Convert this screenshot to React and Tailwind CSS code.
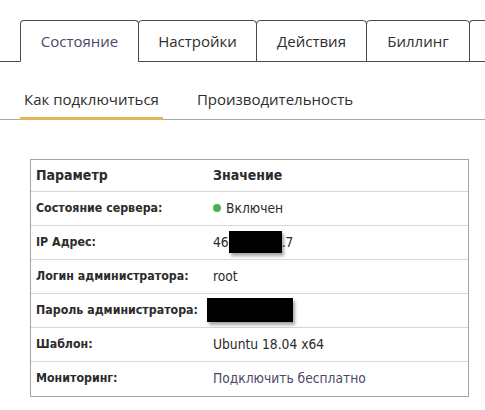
const tabs = [
  { label: "Состояние", w: "w-[119px]" },
  { label: "Настройки", w: "w-[119px]" },
  { label: "Действия", w: "w-[111px]" },
  { label: "Биллинг", w: "w-[104px]" },
];

const rows = [
  { label: "Состояние сервера:", value: "status" },
  { label: "IP Адрес:", value: "ip" },
  { label: "Логин администратора:", value: "root" },
  { label: "Пароль администратора:", value: "password" },
  { label: "Шаблон:", value: "Ubuntu 18.04 x64" },
  { label: "Мониторинг:", value: "monitoring" },
];

function Redacted({ className }) {
  return <span className={"inline-block bg-black shadow-[2px_3px_3px_rgba(0,0,0,0.35)] " + className} />;
}

function Value({ v }) {
  if (v === "status")
    return (
      <span className="flex items-center gap-[5px]">
        <span className="h-2 w-2 rounded-full bg-[#4cae4c]" />
        Включен
      </span>
    );
  if (v === "ip")
    return (
      <span className="flex items-center">
        46
        <Redacted className="h-[22px] w-[53px]" />
        .7
      </span>
    );
  if (v === "password")
    return (
      <span className="-ml-1.5 flex items-center">
        <Redacted className="h-[24px] w-[86px]" />
      </span>
    );
  if (v === "monitoring") return <span className="text-[#4b4866]">Подключить бесплатно</span>;
  return v;
}

export default function App() {
  return (
    <div className="h-[410px] w-[485px] overflow-hidden bg-white" style={{ fontFamily: '"Open Sans", sans-serif' }}>
      <div className="flex pt-5">
        <div className="w-5 shrink-0 border-b border-[#4a4858]" />
        {tabs.map((t, i) => (
          <div
            key={t.label}
            className={
              "flex h-[42px] shrink-0 items-center justify-center whitespace-nowrap rounded-t-[4px] border border-[#4a4858] text-[15px] " +
              t.w +
              (i === 0 ? " border-b-white text-[#4b4866]" : " -ml-px text-[#2d2d2d]")
            }
          >
            {t.label}
          </div>
        ))}
        <div className="-ml-px h-[42px] flex-1 rounded-tl-[4px] border-t border-l border-b border-[#4a4858]" />
      </div>

      <div className="flex gap-[30px] border-b border-[#a9a9a9] pl-5 pt-[26px] text-[15px] text-[#2d2d2d]">
        <div className="-mb-px border-b-[3px] border-[#e6b35c] px-1 pb-[6px]">Как подключиться</div>
        <div className="px-1 pb-[6px]">Производительность</div>
      </div>

      <div
        className="ml-[30px] mt-[39px] w-[439px] border border-[#a3a3a3] text-[13.7px] text-[#2b2b2b]"
        style={{ fontFamily: '"DejaVu Sans Condensed", "DejaVu Sans", sans-serif' }}
      >
        <div className="flex h-[32px] items-center border-b border-[#d6d6d6] text-[14px] font-bold">
          <div className="w-[182px] pl-[5px]">Параметр</div>
          <div>Значение</div>
        </div>
        {rows.map((r, i) => (
          <div key={r.label} className={"flex h-[34px] items-center " + (i < rows.length - 1 ? "border-b border-[#d6d6d6]" : "")}>
            <div className="w-[182px] pl-[5px] text-[12.3px] font-bold">{r.label}</div>
            <div>
              <Value v={r.value} />
            </div>
          </div>
        ))}
      </div>
    </div>
  );
}
